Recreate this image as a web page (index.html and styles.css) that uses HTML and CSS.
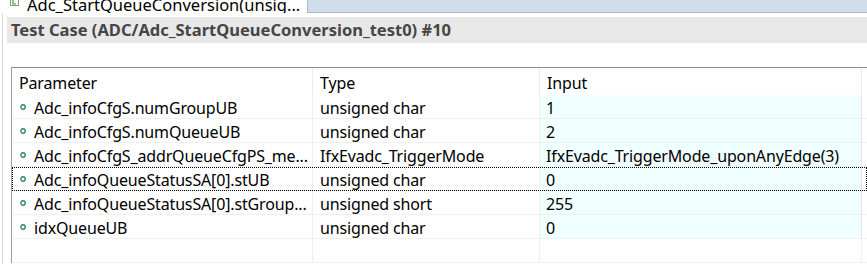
FILE: index.html
```html
<!DOCTYPE html>
<html>
<head>
<meta charset="utf-8">
<link rel="stylesheet" href="styles.css">
</head>
<body>
<div class="tabbar">
  <div class="tab">
    <svg class="tab-icon" width="9" height="9" viewBox="0 0 9 9"><rect x="0.5" y="0.5" width="8" height="8" fill="#fff" stroke="#8a9a8a"/><path d="M3 2v5h3" fill="none" stroke="#4a9a4a" stroke-width="1.2"/></svg>
    <span class="tab-label">Adc_StartQueueConversion(unsig...</span>
    <svg class="tab-close" width="9" height="9" viewBox="0 0 9 9"><path d="M1 1l7 7M8 1l-7 7" stroke="#8f8f8f" stroke-width="1.2" fill="none"/></svg>
  </div>
</div>
<div class="main">
  <div class="titlebar">Test Case (ADC/Adc_StartQueueConversion_test0) #10</div>
  <div class="grid">
    <div class="row head">
      <div class="cell">Parameter</div>
      <div class="cell">Type</div>
      <div class="cell">Input</div>
      <div class="cell end"></div>
    </div>
    <div class="row">
      <div class="cell name"><svg class="dot" width="6" height="6" viewBox="0 0 6 6"><circle cx="3" cy="3" r="2.2" fill="none" stroke="#2e8b57" stroke-width="1.4"/></svg>Adc_infoCfgS.numGroupUB</div>
      <div class="cell">unsigned char</div>
      <div class="cell input">1</div>
      <div class="cell end"></div>
    </div>
    <div class="row">
      <div class="cell name"><svg class="dot" width="6" height="6" viewBox="0 0 6 6"><circle cx="3" cy="3" r="2.2" fill="none" stroke="#2e8b57" stroke-width="1.4"/></svg>Adc_infoCfgS.numQueueUB</div>
      <div class="cell">unsigned char</div>
      <div class="cell input">2</div>
      <div class="cell end"></div>
    </div>
    <div class="row">
      <div class="cell name"><svg class="dot" width="6" height="6" viewBox="0 0 6 6"><circle cx="3" cy="3" r="2.2" fill="none" stroke="#2e8b57" stroke-width="1.4"/></svg>Adc_infoCfgS_addrQueueCfgPS_me...</div>
      <div class="cell">IfxEvadc_TriggerMode</div>
      <div class="cell input">IfxEvadc_TriggerMode_uponAnyEdge(3)</div>
      <div class="cell end"></div>
    </div>
    <div class="row focus">
      <div class="cell name"><svg class="dot" width="6" height="6" viewBox="0 0 6 6"><circle cx="3" cy="3" r="2.2" fill="none" stroke="#2e8b57" stroke-width="1.4"/></svg>Adc_infoQueueStatusSA[0].stUB</div>
      <div class="cell">unsigned char</div>
      <div class="cell input">0</div>
      <div class="cell end"></div>
    </div>
    <div class="row">
      <div class="cell name"><svg class="dot" width="6" height="6" viewBox="0 0 6 6"><circle cx="3" cy="3" r="2.2" fill="none" stroke="#2e8b57" stroke-width="1.4"/></svg>Adc_infoQueueStatusSA[0].stGroup...</div>
      <div class="cell">unsigned short</div>
      <div class="cell input">255</div>
      <div class="cell end"></div>
    </div>
    <div class="row">
      <div class="cell name"><svg class="dot" width="6" height="6" viewBox="0 0 6 6"><circle cx="3" cy="3" r="2.2" fill="none" stroke="#2e8b57" stroke-width="1.4"/></svg>idxQueueUB</div>
      <div class="cell">unsigned char</div>
      <div class="cell input">0</div>
      <div class="cell end"></div>
    </div>
    <div class="row">
      <div class="cell"></div>
      <div class="cell"></div>
      <div class="cell"></div>
      <div class="cell end"></div>
    </div>
  </div>
</div>
</body>
</html>
```
FILE: styles.css
```css
html, body {
  margin: 0;
  padding: 0;
  background: #fff;
  width: 867px;
  height: 264px;
  overflow: hidden;
  font-family: "Noto Sans", "Open Sans", sans-serif;
  font-size: 16px;
  letter-spacing: -0.15px;
  color: #000;
}
.tabbar {
  height: 12px;
  background: #cfddec;
  border-bottom: 1px solid #aab8cb;
  display: flex;
}
.tab {
  width: 308px;
  height: 13px;
  background: #fff;
  border-right: 1px solid #aab8cb;
  box-sizing: border-box;
  display: flex;
  align-items: flex-end;
  overflow: hidden;
}
.tab-icon {
  margin-left: 10px;
  margin-bottom: 7px;
  flex: none;
}
.tab-label {
  margin-left: 8px;
  line-height: 20px;
  margin-bottom: -2px;
  white-space: nowrap;
  color: #000;
  font-size: 16.5px;
  letter-spacing: 0;
}
.tab-close {
  margin-left: 10px;
  margin-bottom: 7px;
  flex: none;
}
.main {
  margin-left: 2px;
  border-left: 1px solid #d6d6d6;
  height: 251px;
  padding-top: 4px;
  box-sizing: border-box;
}
.titlebar {
  margin-left: 4px;
  height: 26px;
  background: #e8e8e8;
  font-weight: bold;
  color: #464646;
  font-size: 16.5px;
  letter-spacing: 0;
  line-height: 26px;
  padding-left: 4px;
  white-space: nowrap;
}
.grid {
  margin-top: 24px;
  margin-left: 8px;
  border-top: 1px solid #8a8a8a;
  border-left: 1px solid #a0a0a0;
}
.row {
  display: grid;
  grid-template-columns: 301px 227px 322px 1fr;
  height: 24px;
  box-sizing: border-box;
  border-bottom: 1px solid #f0f0f0;
}
.row.head {
  height: 27px;
  border-bottom: none;
}
.cell {
  border-right: 1px solid #f0f0f0;
  padding-left: 7px;
  padding-top: 2px;
  box-sizing: border-box;
  white-space: nowrap;
  overflow: hidden;
  display: flex;
  align-items: center;
}
.head .cell {
  padding-left: 7px;
  border-right-color: #ececec;
}
.cell.end {
  border-right: none;
  padding: 0;
}
.cell.input {
  background: #f0ffff;
  padding-left: 6px;
  border-right: 1px solid #e4e4e4;
}
.head .cell.input {
  background: #fff;
}
.cell.name {
  padding-left: 8px;
}
.dot {
  margin-right: 8px;
  margin-top: -1px;
  flex: none;
}
.row.focus {
  outline: 1px dotted #000;
  outline-offset: -1px;
}
```
